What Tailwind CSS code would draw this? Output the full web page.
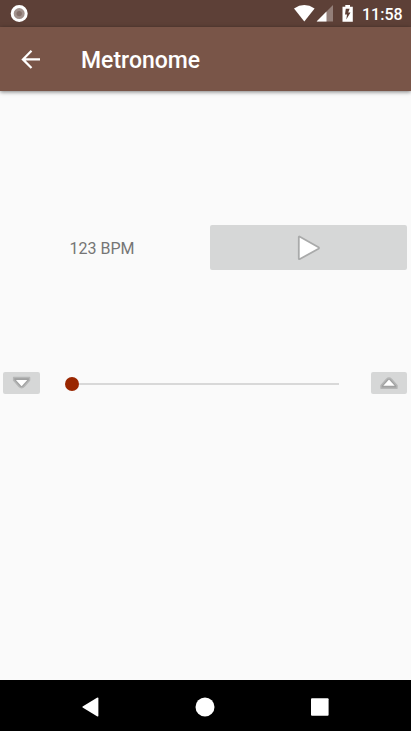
<!DOCTYPE html>
<html lang="en">
<head>
<meta charset="utf-8">
<title>Metronome</title>
<script src="https://cdn.jsdelivr.net/npm/@tailwindcss/browser@4"></script>
</head>
<body class="font-['Roboto',sans-serif]">
<div class="flex h-[731px] w-[411px] flex-col overflow-hidden bg-[#fafafa]">
  <div class="flex h-[27px] shrink-0 items-center justify-between bg-[#5d4037]">
    <svg class="ml-[10px] h-[18px] w-[18px]" viewBox="0 0 18 18"><circle cx="9.2" cy="8.6" r="7" fill="#a1918c" stroke="#fff" stroke-width="3"/><circle cx="9.2" cy="8.6" r="2.7" fill="#85706a"/></svg>
    <div class="flex h-full items-center">
      <svg class="h-[27px] w-[72px]" viewBox="290 0 72 27">
        <path d="M294 8.4 Q304.3 1.8 314.6 8.4 L304.3 21.4Z" fill="#fff"/>
        <path d="M333 5 V21.4 H316.6Z" fill="#937f79"/>
        <path d="M326.5 11.5 V21.4 H316.6Z" fill="#fff"/>
        <path d="M342.5 6.7 H345.3 V5 H350 V6.7 H352.8 V21.8 H342.5Z" fill="#fff"/>
        <path d="M349.6 8.8 H345.8 L345 14.4 H347 L346.3 19.4 L350.5 12.6 H348.2Z" fill="#5d4037"/>
      </svg>
      <span class="mr-[9px] w-[40px] pt-[2px] text-[16px] leading-[25px] font-medium whitespace-nowrap text-white">11:58</span>
    </div>
  </div>
  <header class="z-10 flex h-[64px] shrink-0 items-center bg-[#795548] shadow-[0_1px_4px_rgba(0,0,0,0.5)]">
    <svg class="ml-[21px] size-[20px]" viewBox="0 0 20 20" fill="none" stroke="#fff" stroke-width="2.2"><path d="M19 10.4H2.5M10.5 1.8 1.9 10.4l8.6 8.6"/></svg>
    <h1 class="ml-[40px] pt-[4px] text-[23px] leading-[28px] font-medium text-white">Metronome</h1>
  </header>
  <main class="flex flex-1 flex-col">
    <div class="mt-[134px] flex h-[45px] items-center pr-[4px]">
      <div class="flex-1 pt-[3px] pl-[69.5px] text-[16px] leading-[20px] text-[#757575]">123 BPM</div>
      <button class="flex h-[45px] w-[196.7px] items-center justify-center rounded-[2px] bg-[#d6d7d7]" aria-label="Play">
        <svg class="h-[26px] w-[24px]" viewBox="0.5 0 24 26"><path d="M2.3 2 V23.6 Q2.3 24.6 3.4 24 L22 13.8 Q23 13 22 12.2 L3.4 1.7 Q2.3 1.2 2.3 2Z" fill="#fff" stroke="#a9aaaa" stroke-width="1.8" stroke-linejoin="round"/></svg>
      </button>
    </div>
    <div class="mt-[102px] flex h-[22px] items-center pr-[4px] pl-[3.4px]">
      <button class="flex h-[22px] w-[36.4px] items-center justify-center rounded-[2px] bg-[#d6d7d7]" aria-label="Decrease">
        <svg class="h-[14px] w-[20px]" viewBox="0.4 0.3 20 14"><path d="M2 1.8 H18 V4.5 L12.5 10.8 Q10 13.2 7.5 10.8 L2 4.5Z" fill="#a0a1a1" stroke="#b5b6b6" stroke-width="1.4" stroke-linejoin="round"/><path d="M4.3 4.2 H15.7 L10 10.6Z" fill="#fff"/></svg>
      </button>
      <div class="ml-[25px] flex h-[14px] w-[274.3px] translate-y-[1px] items-center">
        <div class="size-[14px] rounded-full bg-[#992600]"></div>
        <div class="h-[2.4px] flex-1 bg-[#d8d8d8]"></div>
      </div>
      <button class="ml-auto flex h-[22px] w-[36px] items-center justify-center rounded-[2px] bg-[#d6d7d7]" aria-label="Increase">
        <svg class="h-[14px] w-[20px]" viewBox="0 0 20 14"><path d="M2 12.2 H18 V9.5 L12.5 3.2 Q10 0.8 7.5 3.2 L2 9.5Z" fill="#a0a1a1" stroke="#b5b6b6" stroke-width="1.4" stroke-linejoin="round"/><path d="M4.3 9.8 H15.7 L10 3.4Z" fill="#fff"/></svg>
      </button>
    </div>
  </main>
  <nav class="flex h-[51px] shrink-0 items-center bg-black">
    <svg class="h-[51px] w-[411px]" viewBox="0 680 411 51" fill="#fff"><path d="M82.6 706.5 Q82 707 82.6 707.6 L97 716.3 Q98.4 717 98.4 715.5 V698.6 Q98.4 697 97 697.8Z"/><circle cx="205" cy="707" r="9.5"/><rect x="311" y="698.2" width="17.6" height="17.6" rx="1"/></svg>
  </nav>
</div>
</body>
</html>
